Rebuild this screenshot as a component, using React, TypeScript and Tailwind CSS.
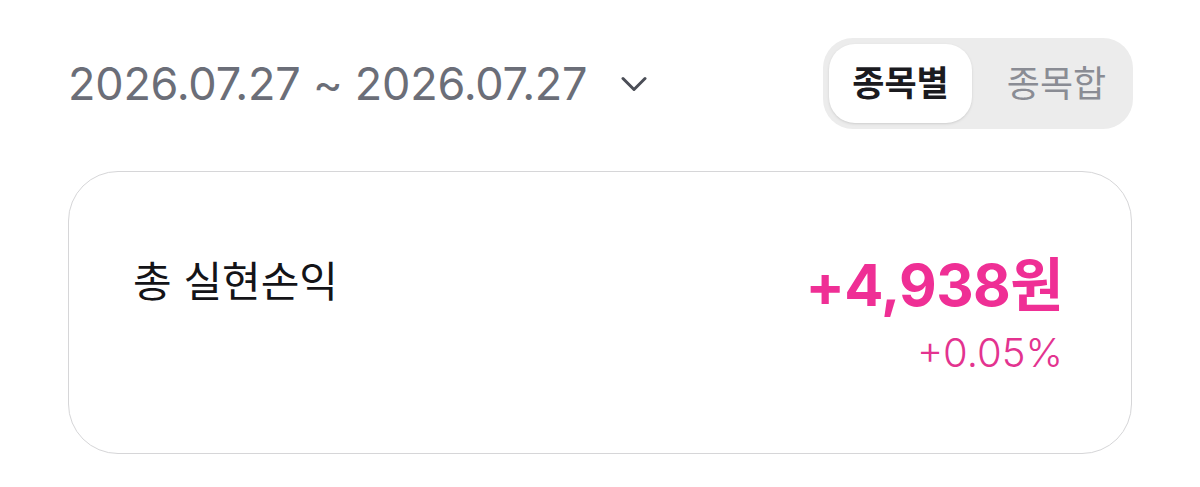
import { useState } from "react";

const font = { fontFamily: '"Inter", "Noto Sans CJK KR", sans-serif' };

const tabs = ["종목별", "종목합"];

const App = () => {
  const [tab, setTab] = useState(0);

  return (
    <div className="min-h-screen bg-white px-[68px] pt-[38px]" style={font}>
      {/* period selector + grouping toggle */}
      <div className="flex items-center justify-between">
        <button className="flex items-center gap-[34px] text-[45px] leading-none tracking-[-0.005em] text-[#6b6e78]">
          <span>2026.07.27 ~ 2026.07.27</span>
          <svg width="26" height="16" viewBox="0 0 26 16" fill="none">
            <path d="M2 2.5 L13 13.5 L24 2.5" stroke="#4b4e57" strokeWidth="3" strokeLinecap="round" strokeLinejoin="round" />
          </svg>
        </button>
        <div className="mr-[-1px] flex h-[91px] items-center rounded-[30px] bg-[#ececec] p-[6px]">
          {tabs.map((t, i) => (
            <button
              key={t}
              onClick={() => setTab(i)}
              className={
                i === tab
                  ? "flex h-full w-[143px] items-center justify-center rounded-[26px] bg-white text-[35px] font-bold text-[#1b1b1f] shadow-sm"
                  : "flex h-full w-[155px] items-center justify-center rounded-[26px] pl-[14px] text-[36px] text-[#8a8c94]"
              }
            >
              {t}
            </button>
          ))}
        </div>
      </div>

      {/* realized profit summary */}
      <div className="mt-[42px] flex h-[283px] items-start justify-between rounded-[50px] border border-[#d6d6d8] bg-white pl-[64px] pr-[68px] pt-[78px]">
        <div className="text-[42px] font-normal text-[#141418]">총 실현손익</div>
        <div className="flex flex-col items-end">
          <div className="text-[58px] leading-[70px] font-bold tracking-[-0.01em] text-[#ef2f95]">+4,938원</div>
          <div className="mt-[13px] text-[40px] leading-none font-light text-[#e3338f]">+0.05%</div>
        </div>
      </div>
    </div>
  );
};

export default App;
